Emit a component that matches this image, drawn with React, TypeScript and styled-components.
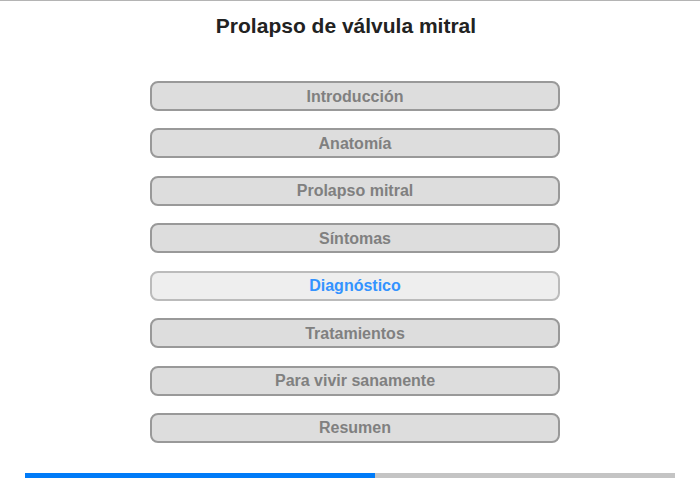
import styled, { createGlobalStyle } from "styled-components"

const GlobalStyle = createGlobalStyle`
  html, body {
    margin: 0;
    padding: 0;
    background: #fff;
  }
  body {
    font-family: "Liberation Sans", Arial, sans-serif;
  }
`

const Page = styled.div`
  width: 700px;
  height: 480px;
  box-sizing: border-box;
  border-top: 1px solid #b4b4b4;
  display: flex;
  flex-direction: column;
  align-items: center;
  overflow: hidden;
`

const Title = styled.h1`
  margin: 13px 8px 0 0;
  height: 24px;
  line-height: 24px;
  font-size: 21px;
  font-weight: bold;
  color: #222;
`

const Menu = styled.nav`
  margin: 43px 0 0 10px;
  display: flex;
  flex-direction: column;
  gap: 17.43px;
`

const Item = styled.div<{ $active?: boolean }>`
  width: 410px;
  height: 30px;
  box-sizing: border-box;
  padding-top: 1px;
  border: 2px solid ${(p) => (p.$active ? "#bbbbbb" : "#999999")};
  border-radius: 8px;
  background: ${(p) => (p.$active ? "#eeeeee" : "#dddddd")};
  color: ${(p) => (p.$active ? "#3393ff" : "#808080")};
  font-size: 16px;
  font-weight: bold;
  display: flex;
  align-items: center;
  justify-content: center;
`

const Progress = styled.div`
  margin-top: 30px;
  width: 650px;
  height: 5px;
  background: #c4c4c4;
  display: flex;
`

const Fill = styled.div`
  height: 100%;
  background: #007bf8;
`

const items = [
  "Introducción",
  "Anatomía",
  "Prolapso mitral",
  "Síntomas",
  "Diagnóstico",
  "Tratamientos",
  "Para vivir sanamente",
  "Resumen",
]

const current = 4

const App = () => {
  return (
    <>
      <GlobalStyle />
      <Page>
        <Title>Prolapso de válvula mitral</Title>
        <Menu>
          {items.map((label, i) => (
            <Item key={label} $active={i === current}>
              {label}
            </Item>
          ))}
        </Menu>
        <Progress>
          <Fill style={{ width: `${(350 / 650) * 100}%` }} />
        </Progress>
      </Page>
    </>
  )
}

export default App
